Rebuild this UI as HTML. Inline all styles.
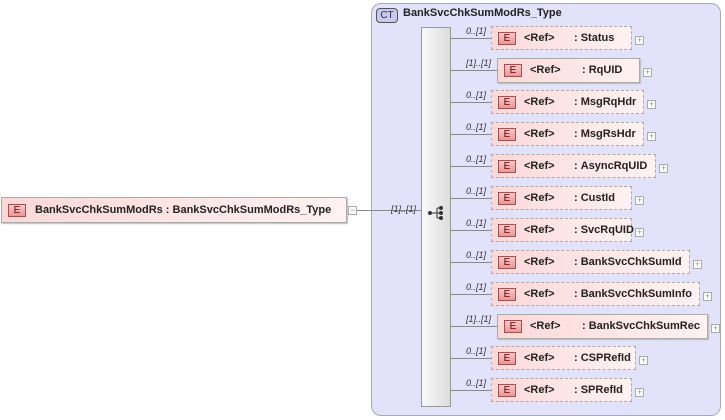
<html><head><style>
body{margin:0;width:725px;height:420px;background:#fff;position:relative;font-family:"Liberation Sans",sans-serif;overflow:hidden}
.a{position:absolute}
.ct{left:371px;top:3px;width:350px;height:413px;background:#e2e2fa;border:1px solid #a8a8b8;border-radius:10px;box-sizing:border-box}
.bar{left:421px;top:27px;width:30px;height:380px;background:linear-gradient(90deg,#fafafa,#dcdcdc);border:1px solid #999;box-sizing:border-box}
.box{height:24px;box-sizing:border-box;background:linear-gradient(90deg,#fcd8d8,#fff2f2);font-size:11px;font-weight:bold;color:#222;line-height:22px;white-space:nowrap}
.opt{border:1px dashed #aaa}
.req{border:1px solid #aaa;box-shadow:1px 1px 1px #bbb}
.e{position:absolute;left:6px;top:5px;width:18px;height:13px;box-sizing:border-box;border:1px solid #a05050;background:linear-gradient(#f8c8c8,#e89898);font-size:10px;font-weight:normal;line-height:11px;text-align:center;color:#600}
.pl{width:9px;height:9px;box-sizing:border-box;border:1px solid #aaa;background:#fff;font-size:9px;line-height:7px;text-align:center;color:#999}
.ln{height:1px;background:#888}
.c{font-size:9px;font-style:italic;color:#333}
</style></head><body>
<div class="a ct"></div>
<div class="a" style="left:376px;top:8px;width:20px;height:13px;border:1px solid #555;border-radius:4px;background:#c8c8f0;font-size:10px;text-align:center;line-height:13px;color:#333">CT</div>
<div class="a" style="left:403px;top:7px;font-size:11px;font-weight:bold;color:#222">BankSvcChkSumModRs_Type</div>
<div class="a bar"></div>
<svg class="a" style="left:427px;top:205px" width="20" height="16"><circle cx="3" cy="8" r="2" fill="#333"/><path d="M5 8h5M10 3v10M10 3h3M10 8h3M10 13h3" stroke="#333" fill="none"/><circle cx="14" cy="3" r="2" fill="#333"/><circle cx="14" cy="8" r="2" fill="#333"/><circle cx="14" cy="13" r="2" fill="#333"/></svg>

<div class="a box req" style="left:1px;top:197px;width:346px;height:26px"><span class="e" style="top:6px">E</span><span style="position:absolute;left:33px;top:1px">BankSvcChkSumModRs&nbsp;:&nbsp;BankSvcChkSumModRs_Type</span></div>
<div class="a pl" style="left:348px;top:206px">−</div>
<div class="a ln" style="left:357px;top:210px;width:64px"></div>
<div class="a c" style="left:391px;top:204px">[1]..[1]</div>

<div id="rows"></div>
<script>
var r=[["Status",0,632],["RqUID",1,640],["MsgRqHdr",0,644],["MsgRsHdr",0,644],["AsyncRqUID",0,656],["CustId",0,632],["SvcRqUID",0,632],["BankSvcChkSumId",0,690],["BankSvcChkSumInfo",0,700],["BankSvcChkSumRec",1,708],["CSPRefId",0,636],["SPRefId",0,632]];
var h="";
r.forEach(function(x,i){var cy=38+32*i;var l=x[1]?497:491;var top=x[1]?cy-12:cy-12;
h+='<div class="a ln" style="left:451px;top:'+cy+'px;width:'+(l-451)+'px"></div>';
h+='<div class="a c" style="left:'+(x[1]?466:466)+'px;top:'+(cy-12)+'px">'+(x[1]?'[1]..[1]':'0..[1]')+'</div>';
h+='<div class="a box '+(x[1]?'req':'opt')+'" style="left:'+l+'px;top:'+top+'px;width:'+(x[2]-l)+'px;height:'+(x[1]?25:24)+'px"><span class="e">E</span><span style="position:absolute;left:32px">&lt;Ref&gt;</span><span style="position:absolute;left:'+(x[1]?84:82)+'px">:&nbsp;'+x[0]+'</span></div>';
h+='<div class="a pl" style="left:'+(x[2]+3)+'px;top:'+(cy-2)+'px">+</div>';});
document.getElementById("rows").innerHTML=h;
</script>
</body></html>
